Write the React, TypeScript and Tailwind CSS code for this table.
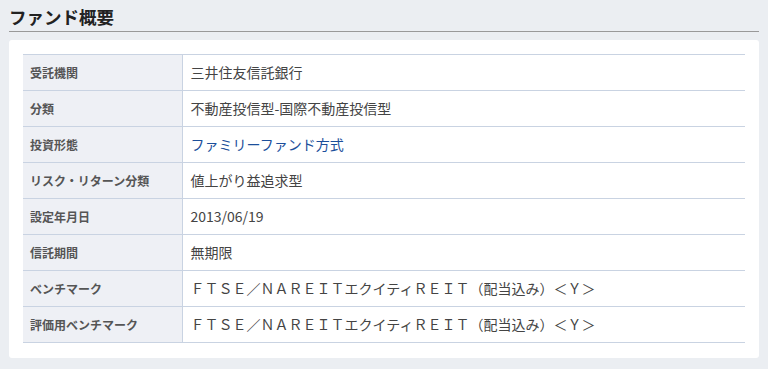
const rows: { label: string; value: string; link?: boolean }[] = [
  { label: '受託機関', value: '三井住友信託銀行' },
  { label: '分類', value: '不動産投信型-国際不動産投信型' },
  { label: '投資形態', value: 'ファミリーファンド方式', link: true },
  { label: 'リスク・リターン分類', value: '値上がり益追求型' },
  { label: '設定年月日', value: '2013/06/19' },
  { label: '信託期間', value: '無期限' },
  { label: 'ベンチマーク', value: 'ＦＴＳＥ／ＮＡＲＥＩＴエクイティＲＥＩＴ（配当込み）＜Ｙ＞' },
  { label: '評価用ベンチマーク', value: 'ＦＴＳＥ／ＮＡＲＥＩＴエクイティＲＥＩＴ（配当込み）＜Ｙ＞' },
];

export default function App() {
  return (
    <div
      className="min-h-[369px] bg-[#ebeef2] px-[9px] pt-[5px] pb-3"
      style={{ fontFamily: '"Noto Sans CJK JP", "Noto Sans", sans-serif' }}
    >
      <h2 className="border-b border-[#999] pb-[2px] text-[17.5px] leading-[24px] font-bold text-[#222]">
        ファンド概要
      </h2>
      <div className="mt-[8px] rounded-[3px] bg-white px-[14px] pt-[14px] pb-[15px]">
        <table className="w-full border-collapse">
          <tbody>
            {rows.map((r) => (
              <tr key={r.label} className="h-[36px] border-y border-[#c9d3e2]">
                <th className="w-[159px] border-r border-[#c9d3e2] bg-[#eef0f5] pl-[7px] text-left text-[12px] font-bold text-[#555]">
                  {r.label}
                </th>
                <td
                  className={
                    'pl-[8px] text-[14px] ' + (r.link ? 'text-[#1c4f9b]' : 'text-[#444]')
                  }
                >
                  {r.value}
                </td>
              </tr>
            ))}
          </tbody>
        </table>
      </div>
    </div>
  );
}
